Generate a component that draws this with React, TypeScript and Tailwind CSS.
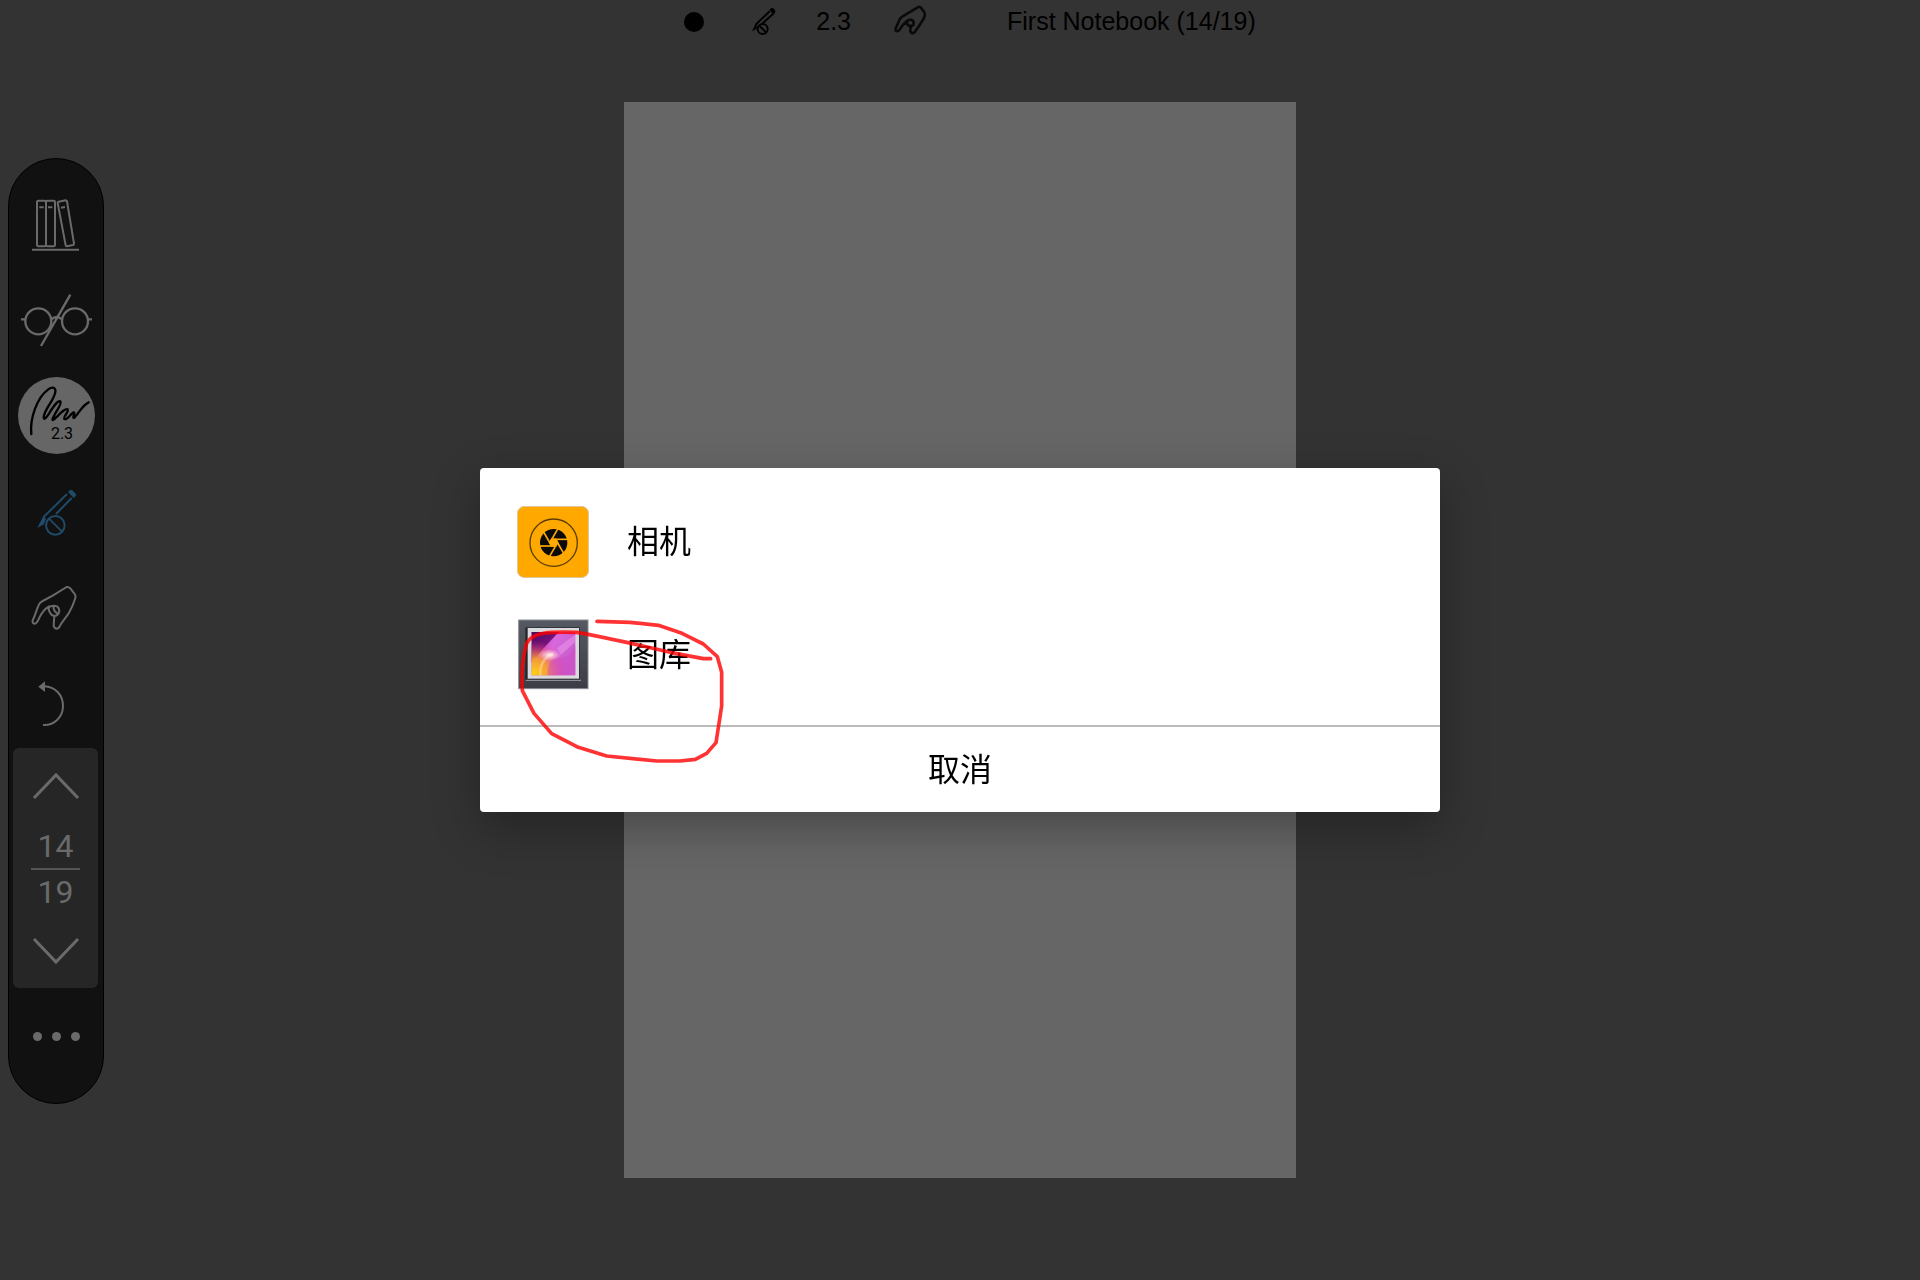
import type { ReactNode } from 'react';

const pageNumber = 14;
const pageCount = 19;
const penWidth = '2.3';

function ToolButton({ label, children }: { label: string; children: ReactNode }) {
  return (
    <button type="button" aria-label={label} className="flex h-[95px] w-full items-center justify-center">
      {children}
    </button>
  );
}

function BooksIcon() {
  return (
    <svg viewBox="27 84 282 285" className="h-[95px] w-[94px]" fill="none" stroke="#6a6a6a" strokeWidth="6">
      <rect x="111" y="152" width="27" height="137" rx="4" />
      <rect x="138" y="152" width="27" height="137" rx="4" />
      <path d="M176,155 L197,151 Q200,151 201,154 L222,281 Q222,284 219,285 L201,289 Q197,289 197,286 L173,159 Q173,156 176,155 Z" />
      <path d="M118,172 H131 M144,172 H157 M183,173 L195,171" />
      <path d="M96,299 H237" />
    </svg>
  );
}

function GlassesIcon() {
  return (
    <svg viewBox="27 369 282 285" className="h-[95px] w-[94px]" fill="none" stroke="#6a6a6a" strokeWidth="7">
      <circle cx="115" cy="514" r="39" />
      <circle cx="225" cy="514" r="39" />
      <path d="M154,508 Q170,494 186,508 M63,508 H76 M264,508 H276 M211,434 L123,588" />
    </svg>
  );
}

function PenBadge() {
  return (
    <span className="grid h-[77px] w-[77px] rounded-full bg-[#666]">
      <svg
        viewBox="51 51 231 231"
        className="col-start-1 row-start-1 h-[77px] w-[77px]"
        fill="none"
        stroke="#000"
        strokeWidth="7"
        strokeLinecap="round"
        strokeLinejoin="round"
      >
        <path d="M91,222 C86,176 108,112 142,88 C160,76 168,88 160,106 C150,132 130,150 128,172 C128,184 140,168 147,156 C157,140 168,122 178,124 C184,130 168,150 160,166 C150,184 154,184 168,170 C180,156 196,144 200,148 C204,154 186,172 190,177 C198,182 206,164 218,157 C224,156 212,176 220,173 C236,156 244,136 263,127" />
      </svg>
      <span className="col-start-1 row-start-1 self-end pb-[10px] pl-3 text-center font-[Roboto,sans-serif] text-base leading-5 text-black">
        {penWidth}
      </span>
    </span>
  );
}

function NoPenIcon() {
  return (
    <svg viewBox="27 309 282 285" className="h-[95px] w-[94px]" fill="none" stroke="#1f4a68" strokeWidth="6">
      <path d="M201,402 L133,469 L128,486 M215,414 L168,462" />
      <path d="M204,396 L210,390 Q213,388 217,391 L227,401 Q230,405 227,408 L221,414 Z" fill="#1f4a68" stroke="none" />
      <path d="M130,468 L112,504 L132,493 L138,476 Z" fill="#1f4a68" stroke="none" />
      <circle cx="166" cy="496" r="28" />
      <path d="M147,476 L186,515" />
    </svg>
  );
}

function HandIcon() {
  return (
    <svg
      viewBox="27 -6 282 285"
      className="h-[95px] w-[94px]"
      fill="none"
      stroke="#6a6a6a"
      strokeWidth="6"
      strokeLinejoin="round"
    >
      <path d="M200,81 Q206,80 211,85 L224,102 Q228,107 226,114 Q219,138 207,158 C198,173 186,184 179,199 Q176,206 169,206 Q161,204 161,195 L163,168 Q150,166 146,148 L147,139 C133,147 124,160 117,175 Q111,190 104,191 Q96,190 98,181 C107,163 110,147 117,133 Q120,127 128,123 L158,107 Z" />
      <path d="M146,142 Q158,134 171,139 Q182,149 175,162 Q168,169 163,168 M160,138 Q160,154 173,161" />
    </svg>
  );
}

function UndoIcon() {
  return (
    <svg viewBox="27 279 282 285" className="h-[95px] w-[94px]" fill="none" stroke="#6a6a6a" strokeWidth="6">
      <path d="M132,379 C167,380 189,406 189,438 C189,470 164,497 129,495" />
      <path d="M115,380 L135,364 V396 Z" fill="#6a6a6a" stroke="none" />
    </svg>
  );
}

function Chevron({ d }: { d: string }) {
  return (
    <svg viewBox="0 0 48 28" className="h-7 w-12" fill="none" stroke="#6a6a6a" strokeWidth="3">
      <path d={d} />
    </svg>
  );
}

function Sidebar() {
  return (
    <aside className="mt-14 ml-2 w-24 rounded-full border border-black bg-[#111] pt-[19px] pb-[19px]">
      <ToolButton label="Library">
        <BooksIcon />
      </ToolButton>
      <ToolButton label="Read mode">
        <GlassesIcon />
      </ToolButton>
      <ToolButton label="Pen">
        <PenBadge />
      </ToolButton>
      <ToolButton label="Pen only">
        <NoPenIcon />
      </ToolButton>
      <ToolButton label="Hand">
        <HandIcon />
      </ToolButton>
      <ToolButton label="Undo">
        <UndoIcon />
      </ToolButton>

      {/* Page navigation */}
      <div className="mr-[5px] ml-1 flex flex-col items-center rounded-md bg-[#262626] font-[Roboto,sans-serif] text-[32px] leading-[44px] text-[#6a6a6a]">
        <button type="button" aria-label="Previous page" className="flex h-[76px] w-full items-center justify-center">
          <Chevron d="M2,26 L24,3 L46,26" />
        </button>
        <span>{pageNumber}</span>
        <span className="border-t-2 border-[#555] px-[7px]">{pageCount}</span>
        <button type="button" aria-label="Next page" className="flex h-[74px] w-full items-center justify-center">
          <Chevron d="M2,2 L24,25 L46,2" />
        </button>
      </div>

      <button type="button" aria-label="More" className="flex h-24 w-full items-center justify-center gap-[10px]">
        <span className="h-[9px] w-[9px] rounded-full bg-[#6a6a6a]" />
        <span className="h-[9px] w-[9px] rounded-full bg-[#6a6a6a]" />
        <span className="h-[9px] w-[9px] rounded-full bg-[#6a6a6a]" />
      </button>
    </aside>
  );
}

function StatusBar() {
  return (
    <header className="h-[102px]">
      <div className="flex h-11 items-center justify-center pl-5 font-['Liberation_Sans',sans-serif] text-[25px] text-black">
        <span className="h-5 w-5 rounded-full bg-black" />
        <svg viewBox="278 22 72 84" className="ml-12 h-7 w-6" fill="none" stroke="#000" strokeWidth="6">
          <path d="M331,32 L291,70 L287,84 M341,40 L310,68" />
          <path d="M330,27 L336,22 Q340,21 344,25 L348,31 Q349,35 345,39 L342,42 Z" fill="#000" stroke="none" />
          <path d="M289,70 L278,92 L292,84 Z" fill="#000" stroke="none" />
          <circle cx="310" cy="85" r="15" />
          <path d="M299,74 L321,96" />
        </svg>
        <span className="ml-10">{penWidth}</span>
        <svg
          viewBox="705 15 96 96"
          className="ml-[43px] h-8 w-8 overflow-visible"
          fill="none"
          stroke="#000"
          strokeOpacity="0.8"
          strokeWidth="8"
          strokeLinejoin="round"
        >
          <path d="M776,19 Q781,16 786,20 L796,34 Q799,39 797,46 C791,62 777,78 768,92 Q764,98 758,96 Q753,93 754,86 L755,76 Q744,73 742,62 C734,68 727,78 721,87 Q716,93 710,89 Q708,86 711,80 L722,55 Q725,49 731,46 Z" />
          <path d="M742,62 Q751,52 761,58 Q767,66 762,73 L755,76" />
        </svg>
        <h1 className="ml-[81px]">
          First Notebook ({pageNumber}/{pageCount})
        </h1>
      </div>
    </header>
  );
}

function CameraIcon() {
  return (
    <svg viewBox="141 137 216 216" className="h-[72px] w-[72px]">
      <rect x="142" y="138" width="214" height="214" rx="22" fill="#ffa800" stroke="#d8c9a8" strokeWidth="3" />
      <circle cx="251" cy="247" r="71" fill="none" stroke="#5c3d00" strokeWidth="4" />
      <circle cx="251" cy="247" r="41" fill="#0a0a0a" />
      <g transform="translate(251 247)" stroke="#ffa800" strokeWidth="5">
        <path d="M-6,-10 H6 L12,0 L6,10 H-6 L-12,0 Z" fill="#ffa800" />
        {[0, 60, 120, 180, 240, 300].map((angle) => (
          <path key={angle} d="M-6,-10 H42" transform={`rotate(${angle})`} />
        ))}
      </g>
    </svg>
  );
}

function GalleryIcon() {
  return (
    <svg viewBox="0 0 216 216" className="h-[72px] w-[72px]">
      <defs>
        <linearGradient id="frame" x1="0" y1="0" x2="0" y2="1">
          <stop offset="0" stopColor="#555962" />
          <stop offset="1" stopColor="#3c3c46" />
        </linearGradient>
        <linearGradient id="photo" x1="0" y1="0" x2="1" y2="0.5">
          <stop offset="0" stopColor="#a02fa0" />
          <stop offset="0.5" stopColor="#d868dc" />
          <stop offset="1" stopColor="#c85ccc" />
        </linearGradient>
        <radialGradient id="flare" cx="0.05" cy="0.95" r="0.75">
          <stop offset="0" stopColor="#ffd010" />
          <stop offset="0.45" stopColor="#f8a030" stopOpacity="0.9" />
          <stop offset="1" stopColor="#f03090" stopOpacity="0" />
        </radialGradient>
        <radialGradient id="glow">
          <stop offset="0" stopColor="#fff4e8" />
          <stop offset="1" stopColor="#ffd0e8" stopOpacity="0" />
        </radialGradient>
        <linearGradient id="dark" x1="0" y1="0" x2="0.6" y2="1">
          <stop offset="0" stopColor="#4a0a5c" />
          <stop offset="0.6" stopColor="#7c1480" />
          <stop offset="1" stopColor="#c0206c" />
        </linearGradient>
      </defs>
      <rect x="5" y="3" width="208" height="206" fill="url(#frame)" stroke="#888b92" strokeWidth="3" />
      <rect x="25" y="25" width="163" height="160" fill="#25262c" />
      <path d="M26,184 H192" stroke="#8d8d95" strokeWidth="4" />
      <rect x="32" y="27" width="154" height="152" fill="#dadade" />
      <rect x="44" y="39" width="131" height="130" fill="url(#photo)" />
      <path d="M44,39 H125 L76,92 L44,130 Z" fill="url(#dark)" />
      <rect x="44" y="39" width="131" height="130" fill="url(#flare)" />
      <path d="M92,169 C92,140 100,120 122,114 C142,120 168,106 175,80 V169 Z" fill="#d04cc4" fillOpacity="0.5" />
      <path d="M120,88 L175,46 V68 L132,108 Z" fill="#ee9cf0" fillOpacity="0.5" />
      <path d="M70,169 C68,140 80,116 108,104" fill="none" stroke="#ffd9a0" strokeOpacity="0.5" strokeWidth="8" />
      <ellipse cx="98" cy="108" rx="34" ry="18" fill="url(#glow)" />
    </svg>
  );
}

// Freehand loop drawn over the dialog
function Scribble() {
  return (
    <svg
      viewBox="30 24 750 990"
      className="pointer-events-none absolute top-0 left-0 h-[330px] w-[250px]"
      fill="none"
      stroke="#f00"
      strokeOpacity="0.8"
      strokeWidth="11"
      strokeLinecap="round"
      strokeLinejoin="round"
    >
      <path d="M381,484 L480,487 L565,496 L636,520 L700,552 L742,590 L755,637 L755,738 L738,848 L710,880 L676,898 L630,903 L560,903 L410,888 L325,862 L245,821 L192,760 L157,692 C154,640 158,590 170,550 C186,518 230,514 320,517 L355,523 L470,547 L600,577 L700,596 L722,596" />
    </svg>
  );
}

function SourceDialog() {
  return (
    <div
      role="dialog"
      aria-label="Image source"
      className="relative w-1/2 rounded bg-white pt-[17px] font-[Roboto,'Noto_Sans_CJK_SC',sans-serif] text-[32px] text-black shadow-[0_16px_48px_rgba(0,0,0,0.3)]"
    >
      <button type="button" className="flex h-[113px] w-full items-center gap-[38px] px-[37px]">
        <CameraIcon />
        相机
      </button>
      <button type="button" className="flex h-[113px] w-full items-center gap-[38px] px-[37px]">
        <GalleryIcon />
        图库
      </button>
      <button type="button" className="mt-[14px] h-[87px] w-full border-t-2 border-[#bbb]">
        取消
      </button>
      <Scribble />
    </div>
  );
}

export default function App() {
  return (
    <div className="min-h-screen bg-[#333]">
      <StatusBar />
      <div className="grid grid-cols-[104px_1fr_104px] items-start">
        <Sidebar />
        <main className="flex justify-center pb-[102px]">
          <div className="aspect-[672/1076] w-[35vw] bg-[#666]" />
        </main>
      </div>
      <div className="fixed inset-0 flex items-center justify-center">
        <SourceDialog />
      </div>
    </div>
  );
}
